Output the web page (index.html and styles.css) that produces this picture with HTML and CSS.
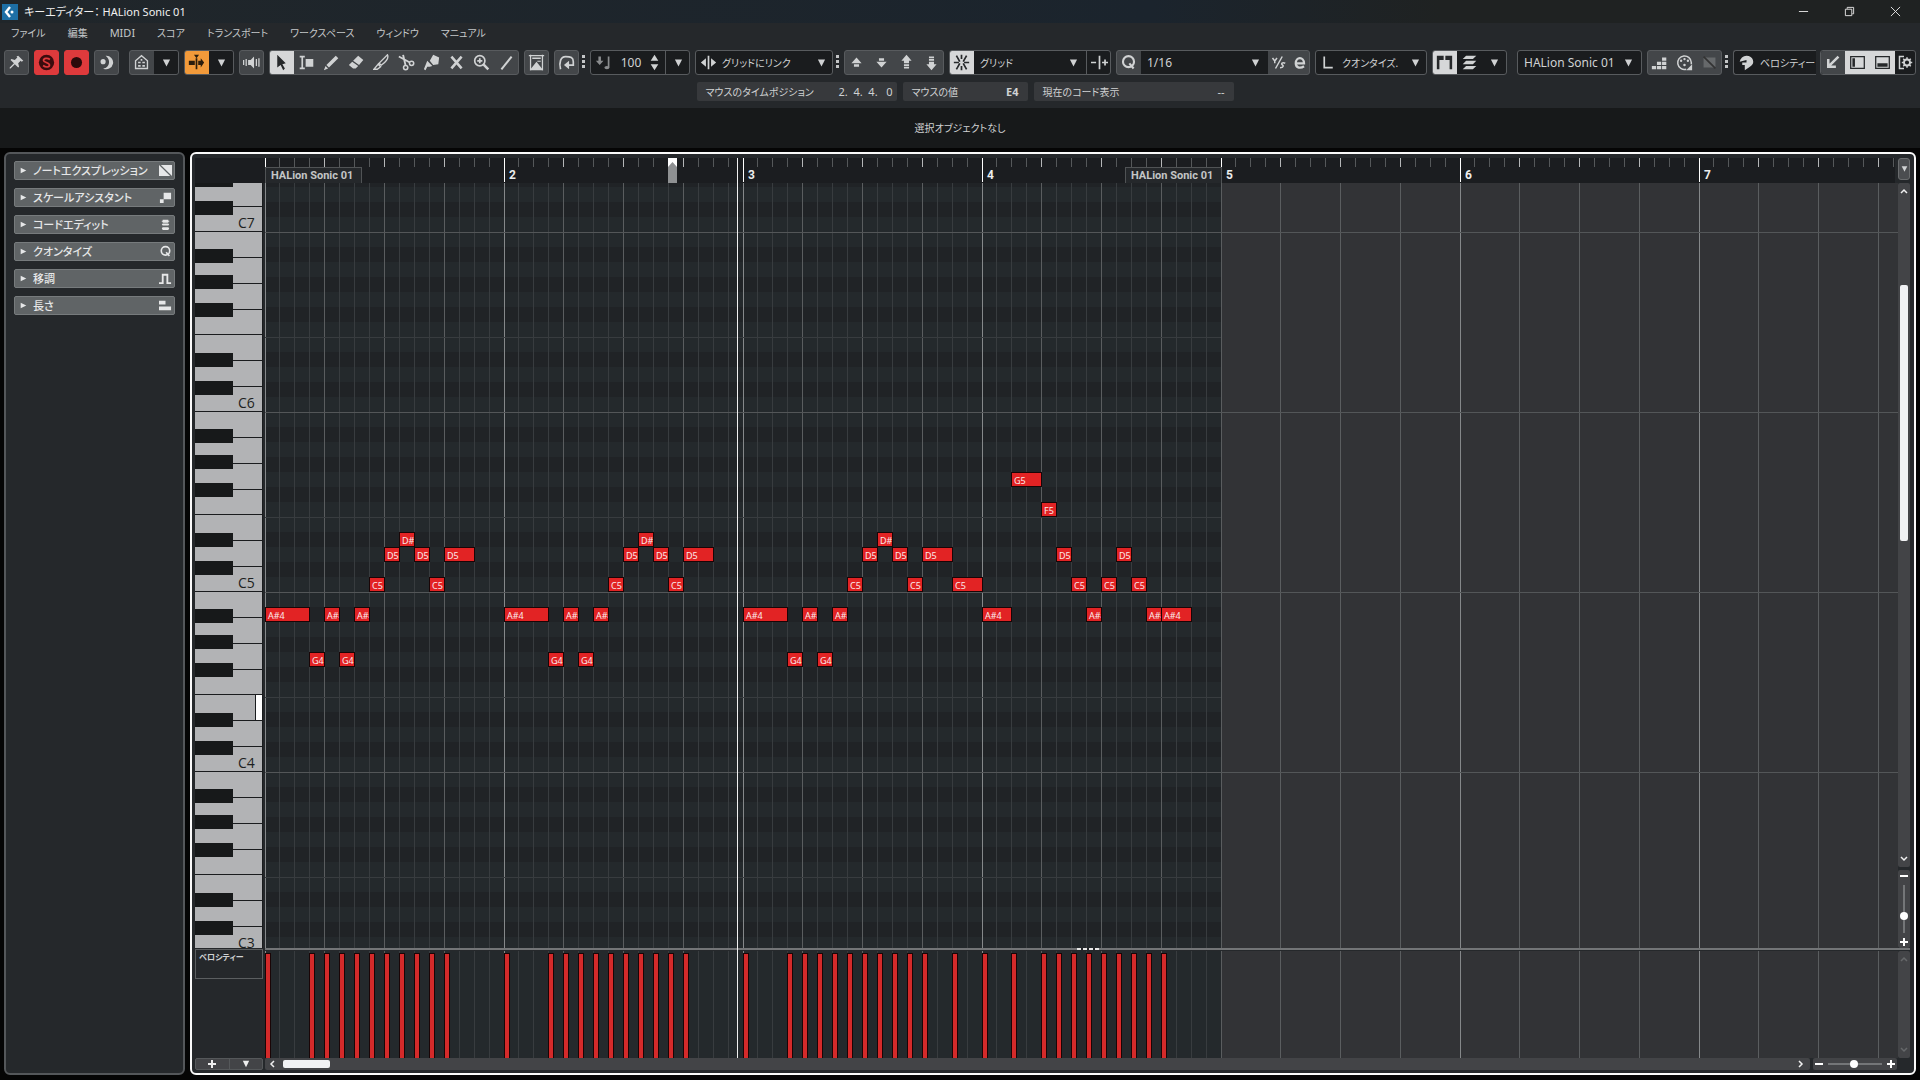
FILE: index.html
```html
<!DOCTYPE html>
<html lang="ja">
<head>
<meta charset="utf-8">
<title>キーエディター： HALion Sonic 01</title>
<link rel="stylesheet" href="styles.css">
</head>
<body>
<svg class="sprite" aria-hidden="true">
  <symbol id="down" viewBox="0 0 10 10"><path d="M1 1h8L5 9z"/></symbol>
  <symbol id="right" viewBox="0 0 10 10"><path d="M1 1v8l8-4z"/></symbol>
  <symbol id="pin" viewBox="0 0 20 20"><path d="M12 2l6 6-2 1-1-1-3 3 1 4-1 1-4-4-5 5-1 0 0-1 5-5-4-4 1-1 4 1 3-3-1-1z"/></symbol>
  <symbol id="solo" viewBox="0 0 20 20"><circle cx="10" cy="10" r="9" fill="#3b0c0e"/><path d="M14 6.500C11 4 6.500 5 6.500 7.500S13.500 10 13.500 13 9 16 6 13.500" fill="none" stroke="#e03a3c" stroke-width="2"/></symbol>
  <symbol id="rec" viewBox="0 0 20 20"><circle cx="10" cy="10" r="6.500" fill="#2a0a0b"/></symbol>
  <symbol id="moon" viewBox="0 0 20 20"><path d="M9 2a8 8 0 1 1-3 15c7 0 10-10 3-15z"/><circle cx="6" cy="9" r="3"/></symbol>
  <symbol id="house" viewBox="0 0 20 20"><path d="M3 17V8l7-6 7 6v9z" fill="none" stroke="currentColor" stroke-width="1.600"/><path d="M6 9h3v2H6zm5 0h3v2h-3zm-5 4h3v2H6zm5 0h3v2h-3zM9 6h2v2H9z"/></symbol>
  <symbol id="scroll" viewBox="0 0 20 20"><path d="M1 8h7v5H1zM9 5h2v13H9zM7 1h6l-3 4zM12 8h3V5l4 5-4 6v-3h-3z"/></symbol>
  <symbol id="speaker" viewBox="0 0 20 20"><path d="M6 7h3l4-4v14l-4-4H6zM3 6h1.500v8H3zM0 7h1.500v6H0zM15 6h1.500v8H15zM18 5h1.500v10H18z"/></symbol>
  <symbol id="arrow" viewBox="0 0 20 20"><path d="M5 1l10 10-4 1 3 5-2 2-3-6-4 3z"/></symbol>
  <symbol id="range" viewBox="0 0 20 20"><path d="M2 2h6v2H6v12h2v2H2v-2h2V4H2zM9 6h9v9H9z"/></symbol>
  <symbol id="pencil" viewBox="0 0 20 20"><path d="M15 2l3 3L7 16l-3-3zM3 14l3 3-5 2z"/></symbol>
  <symbol id="eraser" viewBox="0 0 20 20"><path d="M12 2l6 5-5 6-7-5zM5 9l7 5-3 3H6l-5-4z"/></symbol>
  <symbol id="knife" viewBox="0 0 20 20"><path d="M17 1c2 4-3 9-7 12l-3-2zM6 12l3 3-4 3H1z" fill="none" stroke="currentColor" stroke-width="1.600"/></symbol>
  <symbol id="scissors" viewBox="0 0 20 20"><path d="M1 3l13 7M6 1l3 13" fill="none" stroke="currentColor" stroke-width="2.200"/><circle cx="16" cy="11" r="2.500" fill="none" stroke="currentColor" stroke-width="1.800"/><circle cx="9" cy="16" r="2.500" fill="none" stroke="currentColor" stroke-width="1.800"/></symbol>
  <symbol id="glue" viewBox="0 0 20 20"><path d="M12 1l7 3-1 8-6 1-4-5zM5 8l6 6-3 1-3 0-2 4-2-1z"/></symbol>
  <symbol id="mute" viewBox="0 0 20 20"><path d="M4 3l12 14M16 3L4 17" stroke="currentColor" stroke-width="3"/></symbol>
  <symbol id="zoom" viewBox="0 0 20 20"><circle cx="8" cy="8" r="6" fill="none" stroke="currentColor" stroke-width="2"/><path d="M12 12l6 6" stroke="currentColor" stroke-width="3"/><path d="M5 7h2V5h2v2h2v2H9v2H7V9H5z"/></symbol>
  <symbol id="line" viewBox="0 0 20 20"><path d="M4 18L16 3" stroke="currentColor" stroke-width="2.400"/></symbol>
  <symbol id="autoscore" viewBox="0 0 20 20"><path d="M3 1v18M17 1v18M1 2h18" fill="none" stroke="currentColor" stroke-width="1.500"/><path d="M5 4h10v2H5zM11 8h4v1h-4zM2 19l4-5 4-5 4 5 4 5z"/></symbol>
  <symbol id="loop" viewBox="0 0 20 20"><path d="M3 18C1 10 3 3 9 3s9 1 9 6v4h-6" fill="none" stroke="currentColor" stroke-width="2"/><path d="M7 13l6-5v10z"/></symbol>
  <symbol id="velo" viewBox="0 0 20 20"><path d="M4 3h3v5h3l-4.500 5L1 8h3zM15 3h2v13h-2z"/><ellipse cx="14" cy="16" rx="3" ry="2"/></symbol>
  <symbol id="spin" viewBox="0 0 10 20"><path d="M5 1l4.500 7h-9zM5 19l4.500-7h-9z"/></symbol>
  <symbol id="link" viewBox="0 0 20 20"><path d="M9 2h2v16H9zM7 5v10l-6-5zM13 5v10l6-5z"/></symbol>
  <symbol id="up1" viewBox="0 0 20 20"><path d="M10 4l6 7H4zM7 12h6v3H7z"/></symbol>
  <symbol id="dn1" viewBox="0 0 20 20"><path d="M10 16l6-7H4zM7 5h6v3H7z"/></symbol>
  <symbol id="up2" viewBox="0 0 20 20"><path d="M10 1l6 7H4zM7 8h6v3H7zM7 12h6v2H7zM7 15h6v2H7z"/></symbol>
  <symbol id="dn2" viewBox="0 0 20 20"><path d="M10 19l6-7H4zM7 9h6v3H7zM7 6h6v2H7zM7 3h6v2H7z"/></symbol>
  <symbol id="snap" viewBox="0 0 20 20"><path d="M10 1v5M10 14v5M4 2l4 7M16 2l-4 7M4 18l4-7M16 18l-4-7M1 10h6M13 10h6" fill="none" stroke="currentColor" stroke-width="2"/></symbol>
  <symbol id="gridtype" viewBox="0 0 20 20"><path d="M0 9h6v2H0zM9 2h2v16H9zM13 9h7v2h-7zM15.500 6.500h2v7h-2z"/></symbol>
  <symbol id="q" viewBox="0 0 20 20"><circle cx="10" cy="9" r="6.500" fill="none" stroke="currentColor" stroke-width="2.500"/><path d="M11 11l5 6" stroke="currentColor" stroke-width="2.500"/></symbol>
  <symbol id="iter" viewBox="0 0 20 20"><path d="M15 2L6 18M2 4l3 4 3-4M5 8v3" fill="none" stroke="currentColor" stroke-width="2"/><path d="M19 11c-4-2-6 1-4 2s2 4-3 4" fill="none" stroke="currentColor" stroke-width="2"/></symbol>
  <symbol id="e" viewBox="0 0 20 20"><path d="M5 11h11c0-9-11-9-11 0 0 7 7 7 11 4" fill="none" stroke="currentColor" stroke-width="3"/></symbol>
  <symbol id="ell" viewBox="0 0 20 20"><path d="M5 3v13h10" fill="none" stroke="currentColor" stroke-width="2"/></symbol>
  <symbol id="parts" viewBox="0 0 20 20"><path d="M1 2h8v5H4v11H1zM11 2h8v16h-3V7h-5z"/></symbol>
  <symbol id="layers" viewBox="0 0 20 20"><path d="M6 2h12l-4 4H2zM6 8h12l-4 4H2zM6 14h12l-4 4H2z"/></symbol>
  <symbol id="steps" viewBox="0 0 20 20"><path d="M1 14h5v4H1zM7 14h5v4H7zM13 14h5v4h-5zM7 9h5v4H7zM13 9h5v4h-5zM13 4h5v4h-5z"/></symbol>
  <symbol id="palette" viewBox="0 0 20 20"><path d="M12 18A8 8 0 1 1 18 10v2" fill="none" stroke="currentColor" stroke-width="1.800"/><path d="M19 12v7h-7z"/><circle cx="6" cy="8" r="1.400"/><circle cx="10" cy="6" r="1.400"/><circle cx="14" cy="8" r="1.400"/><circle cx="10" cy="13" r="1.500"/></symbol>
  <symbol id="slash" viewBox="0 0 20 20"><path d="M3 4h14v12H3z" opacity=".5"/><path d="M3 3l14 14" stroke="#333" stroke-width="2"/></symbol>
  <symbol id="head" viewBox="0 0 20 20"><path d="M10 2a8 7 0 0 1 4 13l-6 4v-6H5v-3l5 0V7L2 9a8 8 0 0 1 8-7z"/></symbol>
  <symbol id="diag" viewBox="0 0 20 20"><path d="M17 3L6 14M5 6v9h9" fill="none" stroke="currentColor" stroke-width="3"/></symbol>
  <symbol id="leftzone" viewBox="0 0 20 20"><path d="M2 3h16v14H2z" fill="none" stroke="currentColor" stroke-width="1.500"/><path d="M4 5h3v10H4z"/></symbol>
  <symbol id="lowzone" viewBox="0 0 20 20"><path d="M2 3h16v14H2z" fill="none" stroke="currentColor" stroke-width="1.500"/><path d="M4 11h12v4H4z"/></symbol>
  <symbol id="gear" viewBox="0 0 20 20"><path d="M8 2H2v16h6" fill="none" stroke="currentColor" stroke-width="2"/><circle cx="12" cy="10" r="4" fill="none" stroke="currentColor" stroke-width="2.500"/><path d="M12 3v3M12 14v3M5 10h3M16 10h3M7 5l2 2M17 5l-2 2M7 15l2-2M17 15l-2-2" stroke="currentColor" stroke-width="2"/></symbol>
  <symbol id="s-expr" viewBox="0 0 14 14"><path d="M2 1h12v12z"/><path d="M0 1v12h12z"/></symbol>
  <symbol id="s-scale" viewBox="0 0 14 14"><path d="M5 2h8v7H5zM1 9h4v4H1z"/></symbol>
  <symbol id="s-chord" viewBox="0 0 14 14"><path d="M4 2h6v1h1v1h-1v1H4V4H3V3h1zM4 6h6l1 1-1 1H4L3 7zM4 10h6l1 1-1 2H4l-1-2z"/></symbol>
  <symbol id="s-trans" viewBox="0 0 14 14"><path d="M0 12h4V3h5v9h4" fill="none" stroke="currentColor" stroke-width="2"/></symbol>
  <symbol id="s-len" viewBox="0 0 14 14"><path d="M0 2h7v4H0zM0 8h13v4H0z"/></symbol>
</svg>

<header class="titlebar">
  <svg class="logo" viewBox="0 0 16 16"><path fill="#1d6fa5" d="M0 0h16v16H0z"/><path d="M8 3L4 8l4 5" fill="none" stroke="#fff" stroke-width="2.400"/><circle cx="10" cy="8" r="1.500" fill="#fff"/></svg>
  <h1>キーエディター： HALion Sonic 01</h1>
  <div class="window-buttons">
    <button aria-label="最小化"><svg viewBox="0 0 12 12"><path d="M1 6h10"/></svg></button>
    <button aria-label="元に戻す"><svg viewBox="0 0 12 12"><path d="M1.500 3.500h7v7h-7zM3.500 3V1.500h7v7H9"/></svg></button>
    <button aria-label="閉じる"><svg viewBox="0 0 12 12"><path d="M1 1l10 10M11 1L1 11"/></svg></button>
  </div>
</header>

<nav class="menubar">
  <button>ファイル</button><button>編集</button><button class="latin">MIDI</button><button>スコア</button><button>トランスポート</button><button>ワークスペース</button><button>ウィンドウ</button><button>マニュアル</button>
</nav>

<div class="toolbar">
  <div class="group"><button aria-label="固定"><svg><use href="#pin"/></svg></button></div>
  <div class="group red"><button aria-label="ソロ"><svg><use href="#solo"/></svg></button></div>
  <div class="group red"><button aria-label="録音"><svg><use href="#rec"/></svg></button></div>
  <div class="group"><button aria-label="レトロスペクティブ"><svg><use href="#moon"/></svg></button></div>
  <div class="group spaced"><button aria-label="試聴"><svg><use href="#house"/></svg></button><button class="well" aria-label="開く"><svg class="tri"><use href="#down"/></svg></button></div>
  <div class="group"><button class="orange" aria-label="オートスクロール"><svg><use href="#scroll"/></svg></button><button class="well" aria-label="開く"><svg class="tri"><use href="#down"/></svg></button></div>
  <div class="group"><button aria-label="音"><svg><use href="#speaker"/></svg></button></div>
  <div class="group">
    <button class="on" aria-label="選択"><svg><use href="#arrow"/></svg></button><button aria-label="範囲"><svg><use href="#range"/></svg></button><button aria-label="鉛筆"><svg><use href="#pencil"/></svg></button><button aria-label="消しゴム"><svg><use href="#eraser"/></svg></button><button aria-label="トリム"><svg><use href="#knife"/></svg></button><button aria-label="はさみ"><svg><use href="#scissors"/></svg></button><button aria-label="のり"><svg><use href="#glue"/></svg></button><button aria-label="ミュート"><svg><use href="#mute"/></svg></button><button aria-label="ズーム"><svg><use href="#zoom"/></svg></button><button aria-label="ライン"><svg><use href="#line"/></svg></button>
  </div>
  <div class="group"><button aria-label="自動選択"><svg><use href="#autoscore"/></svg></button></div>
  <div class="group"><button aria-label="ループ"><svg><use href="#loop"/></svg></button></div>
  <i class="dots"></i>
  <div class="group well w-100"><label class="field"><svg class="dim"><use href="#velo"/></svg><input type="text" value="100" aria-label="挿入ベロシティー"><svg class="spin"><use href="#spin"/></svg></label><button class="split" aria-label="開く"><svg class="tri"><use href="#down"/></svg></button></div>
  <div class="group well w-138"><label class="field"><svg><use href="#link"/></svg><select class="kana" aria-label="グリッドにリンク"><option>グリッドにリンク</option></select><svg class="tri"><use href="#down"/></svg></label></div>
  <i class="dots"></i>
  <div class="group"><button aria-label="上へ"><svg><use href="#up1"/></svg></button><button aria-label="下へ"><svg><use href="#dn1"/></svg></button><button aria-label="1オクターブ上"><svg><use href="#up2"/></svg></button><button aria-label="1オクターブ下"><svg><use href="#dn2"/></svg></button></div>
  <div class="group well w-162"><button class="on" aria-label="スナップ"><svg><use href="#snap"/></svg></button><label class="field roomy"><select class="kana" aria-label="スナップタイプ"><option>グリッド</option></select><svg class="tri"><use href="#down"/></svg></label><button class="split" aria-label="グリッドタイプ"><svg><use href="#gridtype"/></svg></button></div>
  <div class="group w-194"><button aria-label="クオンタイズ"><svg><use href="#q"/></svg></button><label class="field roomy well"><select aria-label="クオンタイズ値"><option>1/16</option></select><svg class="tri"><use href="#down"/></svg></label><button class="narrow" aria-label="反復"><svg><use href="#iter"/></svg></button><button class="narrow" aria-label="設定"><svg><use href="#e"/></svg></button></div>
  <div class="group well w-112"><label class="field"><svg><use href="#ell"/></svg><select class="kana" aria-label="長さ"><option>クオンタイズ.</option></select><svg class="tri"><use href="#down"/></svg></label></div>
  <div class="group well"><button class="on" aria-label="パート境界"><svg><use href="#parts"/></svg></button><button aria-label="レイヤー"><svg><use href="#layers"/></svg></button><button aria-label="開く"><svg class="tri"><use href="#down"/></svg></button></div>
  <div class="group well spaced w-125"><label class="field roomy"><select aria-label="パート"><option>HALion Sonic 01</option></select><svg class="tri"><use href="#down"/></svg></label></div>
  <div class="group"><button aria-label="ステップ入力"><svg><use href="#steps"/></svg></button><button aria-label="MIDI入力"><svg><use href="#palette"/></svg></button><button class="dim" aria-label="表示"><svg><use href="#slash"/></svg></button></div>
  <i class="dots"></i>
  <div class="group well cut"><label class="field"><svg><use href="#head"/></svg><select class="kana" aria-label="カラー"><option>ベロシティー</option></select></label></div>
  <div class="group well"><button class="raised" aria-label="ウィンドウ"><svg><use href="#diag"/></svg></button><button class="on" aria-label="左ゾーン"><svg><use href="#leftzone"/></svg></button><button class="on" aria-label="下ゾーン"><svg><use href="#lowzone"/></svg></button><button class="narrow" aria-label="設定"><svg><use href="#gear"/></svg></button></div>
</div>

<div class="status">
  <p class="wide"><span>マウスのタイムポジション</span><span class="latin">2.&nbsp; 4.&nbsp; 4.&nbsp;&nbsp; 0</span></p>
  <p><span>マウスの値</span><b class="latin">E4</b></p>
  <p class="wide"><span>現在のコード表示</span><span class="latin">--</span></p>
</div>
<div class="infoline">選択オブジェクトなし</div>

<main class="workspace">
  <aside class="inspector">
    <button><svg class="fold"><use href="#right"/></svg><span>ノートエクスプレッション</span><svg><use href="#s-expr"/></svg></button>
    <button><svg class="fold"><use href="#right"/></svg><span>スケールアシスタント</span><svg><use href="#s-scale"/></svg></button>
    <button><svg class="fold"><use href="#right"/></svg><span>コードエディット</span><svg><use href="#s-chord"/></svg></button>
    <button><svg class="fold"><use href="#right"/></svg><span>クオンタイズ</span><svg><use href="#q"/></svg></button>
    <button><svg class="fold"><use href="#right"/></svg><span>移調</span><svg><use href="#s-trans"/></svg></button>
    <button><svg class="fold"><use href="#right"/></svg><span>長さ</span><svg><use href="#s-len"/></svg></button>
  </aside>

  <section class="editor">
    <div class="ruler" id="ruler"><svg id="ticks"></svg><span class="clip first">HALion Sonic 01</span><span class="clip last">HALion Sonic 01</span>
      <svg class="locator" viewBox="0 0 9 25"><path fill="#8f9193" d="M0 0h9v25H0z"/><path fill="#fff" d="M0 0h9v9L4.500 4 0 9z"/></svg>
    </div>
    <button class="ruler-menu" aria-label="ルーラー"><svg class="tri"><use href="#down"/></svg></button>
    <svg class="piano" id="piano"></svg>
    <div class="notes" id="notes"><svg id="grid"></svg></div>
    <div class="side">
      <div class="vscroll"><svg viewBox="0 0 8 6"><path d="M1 5l3-3 3 3"/></svg><i></i><svg viewBox="0 0 8 6"><path d="M1 1l3 3 3-3"/></svg></div>
      <div class="vzoom"><button aria-label="縮小"><svg viewBox="0 0 8 8"><path d="M0 3h8v2H0z"/></svg></button><input type="range" value="68" aria-label="垂直ズーム"><button aria-label="拡大"><svg viewBox="0 0 8 8"><path d="M0 3h3V0h2v3h3v2H5v3H3V5H0z"/></svg></button></div>
    </div>
    <div class="divider"><i></i></div>
    <div class="lane-name"><span>ベロシティー</span></div>
    <div class="lane" id="lane"><svg id="lanegrid"></svg></div>
    <div class="vscroll off"><svg viewBox="0 0 8 6"><path d="M1 5l3-3 3 3"/></svg><svg viewBox="0 0 8 6"><path d="M1 1l3 3 3-3"/></svg></div>
    <div class="lane-buttons"><button aria-label="レーン追加"><svg viewBox="0 0 8 8"><path d="M0 3h3V0h2v3h3v2H5v3H3V5H0z"/></svg></button><button aria-label="レーンメニュー"><svg><use href="#down"/></svg></button></div>
    <div class="bottom">
      <div class="hscroll"><svg viewBox="0 0 6 8"><path d="M5 1L2 4l3 3"/></svg><i></i><svg viewBox="0 0 6 8"><path d="M1 1l3 3-3 3"/></svg></div>
      <div class="hzoom"><button aria-label="縮小"><svg viewBox="0 0 8 8"><path d="M0 3h8v2H0z"/></svg></button><input type="range" value="48" aria-label="水平ズーム"><button aria-label="拡大"><svg viewBox="0 0 8 8"><path d="M0 3h3V0h2v3h3v2H5v3H3V5H0z"/></svg></button></div>
    </div>
    <div class="playhead"></div>
  </section>
</main>
<script src="app.js"></script>
</body>
</html>
```
FILE: styles.css
```css
* { box-sizing: border-box; margin: 0; padding: 0; }
html, body { height: 100%; }
body {
  display: flex; flex-direction: column; overflow: hidden;
  background: #25282b; color: #d0d2d3;
  font: 12px/16px "Noto Sans", "Noto Sans CJK JP", sans-serif;
  font-feature-settings: "palt";
}
button, input, select { font: inherit; color: inherit; background: none; border: 0; font-feature-settings: inherit; }
button { display: flex; align-items: center; justify-content: center; white-space: nowrap; }
svg { display: block; fill: currentColor; flex: none; }
.sprite { position: absolute; width: 0; height: 0; }
.tri { width: 9px; height: 10px; }

/* title and menu */
.titlebar { display: flex; align-items: center; gap: 6px; height: 23px; padding: 0 2px; background: linear-gradient(90deg, #20262a, #1b242d 60%, #1f2222 75%); }
.titlebar h1 { flex: 1; font-size: 11px; font-weight: 400; color: #f0f0f0; }
.logo { width: 16px; height: 16px; }
.window-buttons { display: flex; }
.window-buttons button { width: 46px; height: 22px; }
.window-buttons svg { width: 11px; height: 11px; fill: none; stroke: #e8e8e8; }
.menubar { display: flex; gap: 22px; height: 27px; padding: 0 11px 8px; font-size: 10px; color: #c4c7c9; }
.menubar .latin, .status .latin { font-size: 11px; }

/* toolbar */
.toolbar { display: flex; gap: 5px; height: 25px; padding: 0 4px; }
.group { display: flex; flex: none; height: 25px; border: 1px solid #585b5e; border-radius: 3px; background: #434649; overflow: hidden; }
.group button { flex: none; width: 25px; height: 25px; margin-top: -1px; }
.group button:first-child { margin-left: -1px; }
.group button:last-child { margin-right: -1px; }
.group svg { width: 17px; height: 17px; }
.group svg.tri { width: 9px; height: 10px; }
.group svg.spin { width: 9px; height: 17px; }
.group .narrow { width: 21px; }
.group .narrow svg { width: 15px; height: 15px; }
.group.spaced { margin-left: 5px; }
.group.well, .group .well { background: #1a1c1e; }
.group .on { background: #d6d7d8; color: #26282a; }
.group .orange { background: #f29a3a; color: #2b1d0d; }
.group .raised { background: #434649; }
.group.red { background: #de3a3c; border-color: #de3a3c; }
.dim { color: #8a8c8e; }
.group .split { border-left: 1px solid #585b5e; }
.w-100 { width: 100px; }
.w-112 { width: 112px; }
.w-125 { width: 125px; }
.w-138 { width: 138px; }
.w-162 { width: 162px; }
.w-194 { width: 194px; }
.group.cut { flex: 1 1 0; min-width: 0; border-right: 0; border-radius: 3px 0 0 3px; margin-right: -1px; }
.group.cut .field { padding-right: 0; }
.field { display: flex; align-items: center; gap: 5px; flex: 1; min-width: 0; padding: 0 6px 0 4px; }
.field.roomy { padding: 0 8px 0 6px; }
.field select, .field input { appearance: none; flex: 1; min-width: 0; width: 0; height: 23px; outline: 0; }
.field .kana { font-size: 10px; }
.field input { text-align: center; }
.dots { width: 3px; margin: 5px 0 0 -2px; height: 13px; background: repeating-linear-gradient(#c3c5c6 0 3px, #25282b 3px 5px); }

/* status line */
.status { display: flex; justify-content: center; gap: 6px; padding: 7px 0 7px 10px; font-size: 10px; }
.status p { display: flex; justify-content: space-between; align-items: center; width: 125px; height: 19px; padding: 0 9px; background: #37393c; border-radius: 2px; }
.status .wide { width: 200px; }
.status p:first-child { padding-right: 4px; }
.infoline { height: 40px; line-height: 41px; text-align: center; font-size: 10px; background: #17191a; }

/* workspace */
.workspace { flex: 1; display: flex; gap: 5px; min-height: 0; padding: 4px 4px 5px; background: #050505; }
.inspector { width: 181px; flex: none; display: flex; flex-direction: column; gap: 8px; padding: 7px 8px; border: 2px solid #54575a; border-radius: 6px; background: #25282b; }
.inspector button { height: 19px; gap: 6px; padding: 0 2px 0 5px; background: #606466; border: 1px solid #777b7d; border-radius: 2px; color: #e6e7e8; }
.inspector span { flex: 1; text-align: left; font-size: 11px; font-weight: 500; }
.inspector svg { width: 13px; height: 13px; }
.inspector .fold { width: 7px; height: 7px; }

.editor {
  position: relative; flex: 1; min-width: 0; display: grid;
  grid-template-columns: 70px minmax(0, 1fr) 12px;
  grid-template-rows: 25px minmax(0, 1fr) 3px 107px 12px;
  padding: 4px 4px 3px 3px; border: 2px solid #fafafa; border-radius: 6px; background: #25282b;
}
.ruler { position: relative; grid-column: 2; overflow: hidden; background: #1b1d20; box-shadow: -70px 0 #1b1d20; margin-right: 3px; }
.ruler svg:first-child, .notes svg, .lane svg { width: 100%; height: 100%; }
.clip { position: absolute; top: 9px; width: 97px; height: 16px; padding-left: 5px; border: 1px solid #505355; border-bottom: 0; background: #25282b; color: #c3c5c6; font: 700 11px/15px Roboto, sans-serif; white-space: nowrap; }
.clip.first { left: 0; }
.clip.last { left: 860px; }
.locator { position: absolute; top: 0; left: 403px; width: 9px; height: 25px; }
.ruler-menu { height: 22px; background: #4b4d50; border: 1px solid #6a6c6e; border-radius: 3px; }
.ruler-menu svg { width: 7px; height: 8px; }
.piano { width: 68px; height: 100%; background: #191b1d; }
.piano text { font: 14px "Open Sans", sans-serif; fill: #1d1f21; }
.notes { position: relative; overflow: hidden; background: #323336; }
.note { position: absolute; height: 15px; padding-left: 2px; border: 1px solid #1a0506; background: #e22324; color: #fbeaea; font-size: 9px; line-height: 15px; overflow: hidden; white-space: nowrap; }
.side { display: flex; flex-direction: column; gap: 3px; min-height: 0; }
.vscroll { flex: 1; display: flex; flex-direction: column; align-items: center; justify-content: space-between; padding: 5px 0; background: #434447; border-radius: 2px; }
.vscroll svg, .hscroll svg { fill: none; stroke: #f0f0f0; stroke-width: 1.500; }
.vscroll svg { width: 8px; height: 6px; }
.vscroll i { width: 8px; height: 38%; margin-bottom: 224px; border-radius: 2px; background: #f1f2f4; }
.vscroll.off svg { stroke: #66686a; }
.vzoom, .hzoom { display: flex; align-items: center; background: #434447; border-radius: 2px; }
.vzoom { flex-direction: column; height: 78px; }
.vzoom button, .hzoom button { width: 12px; height: 12px; flex: none; color: #fff; }
.vzoom svg, .hzoom svg, .lane-buttons svg { width: 8px; height: 8px; }
.vzoom input, .hzoom input { appearance: none; flex: 1; min-width: 0; min-height: 0; background: linear-gradient(#747678, #747678) center / 2px 100% no-repeat; }
.vzoom input { writing-mode: vertical-lr; width: 8px; margin: 3px 0; }
.hzoom input { height: 8px; background-size: 100% 2px; }
input[type="range"]::-webkit-slider-thumb { appearance: none; width: 8px; height: 8px; border-radius: 50%; background: #fff; }

.divider { grid-column: 2 / 4; display: flex; justify-content: center; border-top: 2px solid #737577; }
.divider i { width: 22px; height: 2px; margin-top: -2px; background: repeating-linear-gradient(90deg, #e8e8e8 0 4px, #25282b 4px 6px); }
.lane-name { grid-column: 1; padding-right: 2px; margin-top: -2px; }
.lane-name span { display: block; height: 30px; padding-left: 3px; border: 1px solid #5b5e60; font-size: 8px; line-height: 14px; font-weight: 700; }
.lane { position: relative; overflow: hidden; background: #323336; }
.velocity { position: absolute; top: 2px; bottom: 0; width: 6px; border: 1px solid #1a0506; border-bottom: 0; background: #d42a2a; }
.lane-buttons { display: flex; width: 68px; background: #434447; border: 1px solid #55585a; border-radius: 2px; }
.lane-buttons button { flex: 1; color: #eee; }
.lane-buttons button + button { border-left: 1px solid #55585a; }
.bottom { grid-column: 2 / 4; display: flex; gap: 3px; padding-right: 13px; }
.hscroll { flex: 1; display: flex; align-items: center; padding: 0 6px 0 4px; background: #434447; border-radius: 2px; }
.hscroll svg { width: 6px; height: 8px; }
.hscroll i { width: 47px; height: 8px; margin: 0 auto 0 8px; border-radius: 2px; background: #f1f2f4; }
.hzoom { width: 84px; gap: 3px; }
.playhead { position: absolute; left: 545px; top: 4px; bottom: 15px; width: 1px; background: #f0f0f0; }
```
FILE: app.js
```js
const BAR = 239, ROW = 15, C7_TOP = 34, PART_END = 64;
const NAMES = ["C", "C#", "D", "D#", "E", "F", "F#", "G", "G#", "A", "A#", "B"];
const $ = id => document.getElementById(id);
const STEPS = Math.floor($("ruler").clientWidth / BAR * 16) + 1;
const x = step => Math.floor(step * BAR / 16);
const rect = (l, t, w, h, c) => `<rect x="${l}" y="${t}" width="${w}" height="${h}" fill="${c}"/>`;

// [start, length, pitch] in sixteenth steps
const phrase = [[0, 3, "A#4"], [3, 1, "G4"], [4, 1, "A#4"], [5, 1, "G4"], [6, 1, "A#4"], [7, 1, "C5"],
  [8, 1, "D5"], [9, 1, "D#5"], [10, 1, "D5"], [11, 1, "C5"], [12, 2, "D5"]];
const ending = [[46, 2, "C5"], [48, 2, "A#4"], [50, 2, "G5"], [52, 1, "F5"], [53, 1, "D5"], [54, 1, "C5"],
  [55, 1, "A#4"], [56, 1, "C5"], [57, 1, "D5"], [58, 1, "C5"], [59, 1, "A#4"], [60, 2, "A#4"]];
const song = [0, 16, 32].flatMap(o => phrase.map(([s, l, p]) => [s + o, l, p])).concat(ending);

function verticals() {
  let out = "";
  for (let s = 0; s < STEPS; s++) {
    if (s > PART_END && s % 4) continue;
    const c = s % 16 === 0 ? "#85888a" : s % 4 === 0 ? "#5a5d5f" : "#383c3f";
    out += rect(x(s), 0, 1, 2000, s === PART_END ? "#5a5d5f" : c);
  }
  return out;
}

// note grid
let g = rect(0, 0, x(PART_END), 2000, "#24292c");
for (let n = 87; n > -12; n--) {
  const y = C7_TOP + (84 - n) * ROW;
  if (NAMES[(n + 24) % 12].includes("#")) g += rect(0, y, x(PART_END), ROW, "#202326");
}
g += verticals();
for (let n = 84; n > -12; n -= 12) {
  const y = C7_TOP + (84 - n) * ROW + ROW;
  g += rect(0, y, "100%", 1, "#535658") + rect(0, y + 105, x(PART_END), 1, "#383c3f");
}
$("grid").innerHTML = g;
$("lanegrid").innerHTML = rect(0, 0, x(PART_END), 2000, "#24292c") + verticals();

// ruler
let r = "";
for (let s = 0; s < STEPS; s++) {
  r += rect(x(s), 0, 1, s % 16 ? 9 : 24, s % 16 === 0 ? "#fff" : s % 4 ? "#55585a" : "#b5b7b8");
  if (s && s % 16 === 0) r += `<text x="${x(s) + 5}" y="21" font-family="Roboto" font-weight="700" font-size="12" fill="#eceded">${s / 16 + 1}</text>`;
}
$("ticks").innerHTML = r;

// keyboard
let k = rect(0, 0, 67, 2000, "#b2b3b5");
for (let o = -1; o < 5; o++) {
  const top = 48 + o * 180;
  [26, 52, 78, 103, 129, 155, 180].forEach(d => { k += rect(0, top + d, 67, 1, "#1a1c1e"); });
  [18, 44, 72, 122, 150].forEach(d => { k += rect(0, top + d, 38, 14, "#17191a"); });
  if (o < 4) k += `<text x="43" y="${top + 177}">C${6 - o}</text>`;
  if (6 - o === 4) k += rect(60, top + 104, 1, 25, "#1a1c1e") + rect(61, top + 104, 6, 25, "#fff");
}
k += rect(0, 0, 38, 4, "#17191a");
$("piano").innerHTML = k;

// notes and velocities
for (const [s, len, pitch] of song) {
  const n = NAMES.indexOf(pitch.slice(0, -1)) + 12 * pitch.slice(-1);
  const note = document.createElement("div");
  note.className = "note";
  note.textContent = pitch;
  note.style.left = x(s) + "px";
  note.style.top = C7_TOP + (84 - n) * ROW + "px";
  note.style.width = x(s + len) - x(s) + 1 + "px";
  $("notes").append(note);
  const v = document.createElement("div");
  v.className = "velocity";
  v.style.left = x(s) + "px";
  $("lane").append(v);
}
```
